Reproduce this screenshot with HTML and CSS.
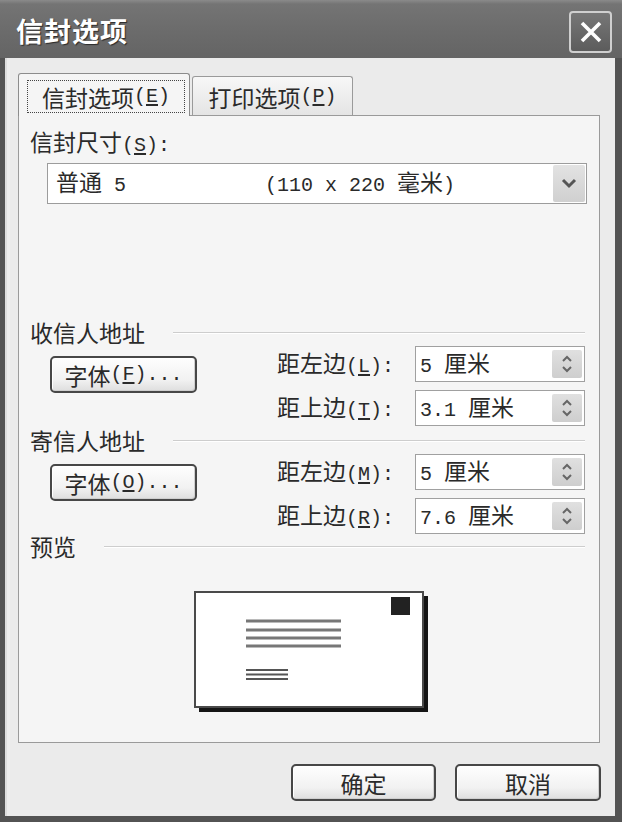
FILE: index.html
```html
<!DOCTYPE html>
<html lang="zh-CN">
<head>
<meta charset="utf-8">
<title>信封选项</title>
<link rel="stylesheet" href="styles.css">
</head>
<body>
<div class="window">
  <header class="titlebar">
    <span class="title">信封选项</span>
    <span class="close" aria-label="关闭"><svg width="24" height="24" viewBox="0 0 24 24"><path d="M3 3 L21 21 M21 3 L3 21" stroke="#fff" stroke-width="3.6" fill="none"/></svg></span>
  </header>
  <div class="client">
    <div class="tabs">
      <div class="tab active"><span class="focus">信封选项<span class="en">(<u>E</u>)</span></span></div>
      <div class="tab">打印选项<span class="en">(<u>P</u>)</span></div>
    </div>
    <div class="panel">
      <div class="label">信封尺寸<span class="en">(<u>S</u>):</span></div>
      <div class="combo">
        <span class="combo-text"><span class="c1">普通<span class="en"> 5</span></span><span class="c2"><span class="en">(110 x 220 </span>毫米<span class="en">)</span></span></span>
        <span class="drop"><svg width="20" height="12" viewBox="0 0 20 12"><path d="M4 2 L10 8 L16 2" stroke="#555" stroke-width="3" fill="none"/></svg></span>
      </div>

      <section class="group first">
        <div class="group-head"><span>收信人地址</span><i class="rule"></i></div>
        <div class="group-body">
          <span class="btn font-btn">字体<span class="en">(<u>F</u>)...</span></span>
          <div class="fields">
            <span class="flabel">距左边<span class="en">(<u>L</u>):</span></span>
            <div class="spin"><span class="val"><span class="en">5 </span>厘米</span><span class="spin-btn"><svg width="30" height="28" viewBox="0 0 30 28"><path d="M11 11 L15 7 L19 11 M11 17 L15 21 L19 17" stroke="#666" stroke-width="2" fill="none"/></svg></span></div>
            <span class="flabel">距上边<span class="en">(<u>T</u>):</span></span>
            <div class="spin"><span class="val"><span class="en">3.1 </span>厘米</span><span class="spin-btn"><svg width="30" height="28" viewBox="0 0 30 28"><path d="M11 11 L15 7 L19 11 M11 17 L15 21 L19 17" stroke="#666" stroke-width="2" fill="none"/></svg></span></div>
          </div>
        </div>
      </section>

      <section class="group second">
        <div class="group-head"><span>寄信人地址</span><i class="rule"></i></div>
        <div class="group-body">
          <span class="btn font-btn">字体<span class="en">(<u>O</u>)...</span></span>
          <div class="fields">
            <span class="flabel">距左边<span class="en">(<u>M</u>):</span></span>
            <div class="spin"><span class="val"><span class="en">5 </span>厘米</span><span class="spin-btn"><svg width="30" height="28" viewBox="0 0 30 28"><path d="M11 11 L15 7 L19 11 M11 17 L15 21 L19 17" stroke="#666" stroke-width="2" fill="none"/></svg></span></div>
            <span class="flabel">距上边<span class="en">(<u>R</u>):</span></span>
            <div class="spin"><span class="val"><span class="en">7.6 </span>厘米</span><span class="spin-btn"><svg width="30" height="28" viewBox="0 0 30 28"><path d="M11 11 L15 7 L19 11 M11 17 L15 21 L19 17" stroke="#666" stroke-width="2" fill="none"/></svg></span></div>
          </div>
        </div>
      </section>

      <section class="group preview">
        <div class="group-head"><span>预览</span><i class="rule"></i></div>
        <div class="preview-box">
          <svg width="240" height="125" viewBox="0 0 240 125">
            <rect x="6" y="6" width="229" height="116" fill="#151515"/>
            <rect x="2" y="2" width="228" height="115" fill="#fff" stroke="#4a4a4a" stroke-width="2"/>
            <rect x="198" y="7" width="19" height="18" fill="#222"/>
            <g stroke="#777" stroke-width="3">
              <line x1="53" y1="31" x2="148" y2="31"/>
              <line x1="53" y1="40" x2="148" y2="40"/>
              <line x1="53" y1="48" x2="148" y2="48"/>
              <line x1="53" y1="56" x2="148" y2="56"/>
            </g>
            <g stroke="#555" stroke-width="2">
              <line x1="53" y1="80" x2="95" y2="80"/>
              <line x1="53" y1="84.5" x2="95" y2="84.5"/>
              <line x1="53" y1="89" x2="95" y2="89"/>
            </g>
          </svg>
        </div>
      </section>
    </div>
    <div class="footer">
      <span class="btn ok">确定</span>
      <span class="btn cancel">取消</span>
    </div>
  </div>
</div>
</body>
</html>
```

FILE: styles.css
```css
* { box-sizing: border-box; }
html, body { margin: 0; padding: 0; }
body {
  width: 622px;
  height: 822px;
  overflow: hidden;
  background: #555;
  font-family: "Noto Sans CJK SC", "Noto Sans", sans-serif;
  font-size: 23px;
  line-height: 24px;
  color: #2a2a2a;
}
.en {
  font-family: "Liberation Mono", "DejaVu Sans Mono", monospace;
  font-size: 20px;
}
u { text-underline-offset: 2px; }

.window {
  width: 622px;
  height: 822px;
  display: flex;
  flex-direction: column;
  background: #535353;
}
.titlebar {
  height: 58px;
  flex: none;
  display: flex;
  align-items: center;
  justify-content: space-between;
  padding: 0 10px 0 16px;
  background: linear-gradient(#8a8a8a 0, #747474 4px, #6c6c6c 50%, #646464 100%);
}
.title {
  font-weight: 700;
  font-size: 27px;
  line-height: 30px;
  color: #fff;
  letter-spacing: 1px;
  text-shadow: 1px 1px 1px #2a2a2a;
  margin-top: 4px;
}
.close {
  width: 43px;
  height: 42px;
  margin-top: 6px;
  border: 2px solid #cfcfcf;
  border-radius: 4px;
  background: linear-gradient(#777, #5c5c5c);
  display: flex;
  align-items: center;
  justify-content: center;
}

.client {
  flex: 1;
  margin: 0 7px 6px 5px;
  background: #ebebeb;
  border-left: 2px solid #dcdcdc;
  display: flex;
  flex-direction: column;
  padding: 15px 15px 0 11px;
}
.tabs {
  height: 42px;
  display: flex;
  align-items: flex-end;
}
.tab {
  height: 39px;
  width: 161px;
  margin-left: 2px;
  border: 1px solid #9a9a9a;
  border-bottom: none;
  border-radius: 3px 3px 0 0;
  background: linear-gradient(#f7f7f7, #e4e4e4);
  display: flex;
  align-items: center;
  justify-content: center;
  padding-top: 2px;
}
.tab.active {
  position: relative;
  z-index: 1;
  width: 172px;
  height: 43px;
  margin-left: 0;
  margin-bottom: -1px;
  background: #f5f5f5;
  border-color: #8c8c8c;
  align-items: flex-start;
  justify-content: flex-start;
  padding: 6px 4px 0 8px;
}
.focus {
  width: 158px;
  height: 33px;
  border: 1px dotted #444;
  display: flex;
  align-items: center;
  justify-content: center;
}

.panel {
  height: 628px;
  border: 1px solid #9a9a9a;
  background: #f5f5f5;
  padding: 13px 14px 0 11px;
  display: flex;
  flex-direction: column;
}
.label { height: 24px; }
.combo {
  margin: 10px 0 0 17px;
  width: 540px;
  height: 41px;
  border: 1px solid #9c9c9c;
  background: #fff;
  display: flex;
  align-items: center;
  justify-content: space-between;
}
.combo-text { padding-left: 8px; display: flex; }
.c1 { width: 209px; }
.drop {
  width: 32px;
  height: 37px;
  margin-right: 1px;
  background: linear-gradient(#e2e2e2, #d0d0d0);
  border-radius: 2px;
  display: flex;
  align-items: center;
  justify-content: center;
}

.group.first { margin-top: 116px; }
.group.second { margin-top: 2px; }
.group-head {
  height: 24px;
  display: flex;
  align-items: center;
  gap: 28px;
}
.rule {
  flex: 1;
  height: 2px;
  border-top: 1px solid #cdcdcd;
  border-bottom: 1px solid #fff;
  margin-top: 2px;
}
.group-body { display: flex; align-items: flex-start; }
.btn {
  display: flex;
  align-items: center;
  justify-content: center;
  height: 37px;
  border: 2px solid #474747;
  border-radius: 5px;
  background: linear-gradient(#fefefe, #f2f2f2 65%, #dedede);
  box-shadow: inset 1px 1px 0 #fff, inset -1px -1px 0 #cfcfcf;
}
.font-btn { width: 147px; margin: 12px 0 0 20px; }
.fields {
  margin: 2px 0 0 auto;
  display: grid;
  grid-template-columns: 138px 170px;
  row-gap: 8px;
  align-items: center;
}
.spin {
  height: 36px;
  border: 1px solid #a0a0a0;
  background: #fff;
  display: flex;
  align-items: center;
  justify-content: space-between;
  padding-left: 4px;
}
.spin-btn {
  width: 30px;
  height: 28px;
  margin-right: 2px;
  background: linear-gradient(#e0e0e0, #cecece);
  border-radius: 2px;
  display: flex;
}

.preview-box {
  display: flex;
  justify-content: center;
  padding-top: 32px;
  padding-left: 10px;
}

.footer {
  margin-top: 21px;
  display: flex;
  justify-content: flex-end;
  gap: 19px;
}
.ok { width: 145px; }
.cancel { width: 146px; margin-right: -1px; }
```
